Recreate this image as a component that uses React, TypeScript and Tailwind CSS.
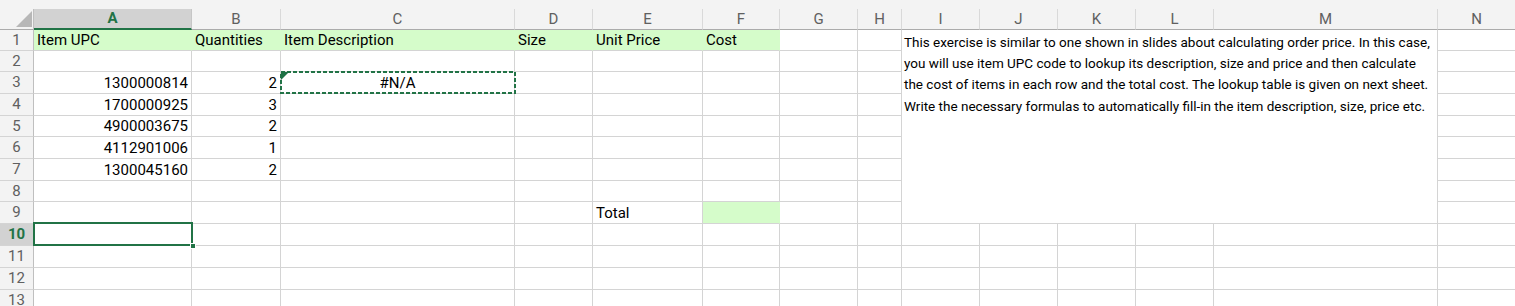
import React from "react";

const COLS = ["A", "B", "C", "D", "E", "F", "G", "H", "I", "J", "K", "L", "M", "N"];
const ROWS = [1, 2, 3, 4, 5, 6, 7, 8, 9, 10, 11, 12, 13];

type Cell = { text?: string; align?: "left" | "right" | "center"; green?: boolean };

const data: Record<string, Cell> = {
  A1: { text: "Item UPC", green: true },
  B1: { text: "Quantities", green: true },
  C1: { text: "Item Description", green: true },
  D1: { text: "Size", green: true },
  E1: { text: "Unit Price", green: true },
  F1: { text: "Cost", green: true },
  A3: { text: "1300000814", align: "right" },
  B3: { text: "2", align: "right" },
  C3: { text: "#N/A", align: "center" },
  A4: { text: "1700000925", align: "right" },
  B4: { text: "3", align: "right" },
  A5: { text: "4900003675", align: "right" },
  B5: { text: "2", align: "right" },
  A6: { text: "4112901006", align: "right" },
  B6: { text: "1", align: "right" },
  A7: { text: "1300045160", align: "right" },
  B7: { text: "2", align: "right" },
  E9: { text: "Total" },
  F9: { green: true },
};

const note = [
  "This exercise is similar to one shown in slides about calculating order price. In this case,",
  "you will use item UPC code to lookup its description, size and price and then calculate",
  "the cost of items in each row and the total cost. The lookup table is given on next sheet.",
  "Write the necessary formulas to automatically fill-in the item description, size, price etc.",
];

// I1:M9 is one merged cell holding the note
const inMerge = (r: number, c: number) => r >= 1 && r <= 9 && c >= 8 && c <= 12;

function cx(...parts: (string | false | undefined)[]) {
  return parts.filter(Boolean).join(" ");
}

const ColHeader = ({ label, active }: { label: string; active: boolean }) => (
  <div
    className={
      active
        ? "flex items-center justify-center bg-[#d2d2d2] border-r border-r-[#c6c6c6] border-b-2 border-b-[#217346] font-bold text-[#217346]"
        : "flex items-center justify-center bg-[#f3f3f3] border-r border-r-[#d9d9d9] border-b border-b-[#ababab] text-[#606060]"
    }
  >
    {label}
  </div>
);

const RowHeader = ({ n, active }: { n: number; active: boolean }) => (
  <div
    className={
      active
        ? "flex items-center justify-center bg-[#d2d2d2] border-r border-r-[#ababab] border-b border-b-[#d4d4d4] font-bold text-[#217346]"
        : "flex items-center justify-center bg-[#f3f3f3] border-r border-r-[#bfbfbf] border-b border-b-[#d4d4d4] text-[#606060]"
    }
  >
    {n}
  </div>
);

const GridCell = ({ id }: { id: string }) => {
  const cell = data[id];
  const align = cell?.align ?? "left";
  return (
    <div
      className={cx(
        "relative flex items-end pb-[2px] px-[3px] whitespace-nowrap border-b border-b-[#d4d4d4]",
        cell?.green ? "bg-[#d5fcca] border-r border-r-transparent" : "border-r border-r-[#d4d4d4]",
        align === "right" && "justify-end",
        align === "center" && "justify-center"
      )}
    >
      {cell?.text}
      {id === "C3" && (
        <svg className="absolute -left-px -top-px z-10" width="236" height="23">
          <rect x="1" y="1" width="234" height="21" fill="none" stroke="#217346" strokeWidth="2" strokeDasharray="4 2" />
          <polygon points="1,1 9,1 1,9" fill="#1e7145" />
        </svg>
      )}
      {id === "A10" && (
        <>
          <div className="absolute -left-px -top-[2px] z-10 w-[160px] h-[24px] border-2 border-[#217346]" />
          <div className="absolute left-[156px] top-[19px] z-20 w-[6px] h-[6px] bg-[#217346] border border-white" />
        </>
      )}
    </div>
  );
};

export default function App() {
  return (
    <div className="w-[1515px] h-[306px] overflow-hidden bg-white text-[15px] leading-none text-black font-['Roboto',sans-serif]">
      <div className="h-[9px] bg-[#f3f3f3]" />
      <div className="grid grid-cols-[34px_158px_89px_234px_78px_110px_77px_78px_44px_78px_78px_78px_78px_224px_78px] grid-rows-[21px_21px_21px_22px_22px_21px_22px_22px_21px_22px_22px_22px_22px_22px]">
        <div className="relative bg-[#f3f3f3] border-r border-r-[#bfbfbf] border-b border-b-[#ababab]">
          <svg className="absolute left-[15px] top-px" width="18" height="18">
            <polygon points="17,1 17,17 1,17" fill="#b7b7b7" />
          </svg>
        </div>
        {COLS.map((c, i) => (
          <ColHeader key={c} label={c} active={i === 0} />
        ))}
        {ROWS.map((r) => (
          <React.Fragment key={r}>
            <RowHeader n={r} active={r === 10} />
            {COLS.map((c, ci) => {
              if (r === 1 && ci === 8) {
                return (
                  <div
                    key={c + r}
                    className="col-span-5 row-span-9 border-r border-r-[#d4d4d4] border-b border-b-[#d4d4d4] pl-[2px] pt-[2px] text-[13.5px] leading-[21.2px] whitespace-nowrap"
                  >
                    {note.map((line) => (
                      <div key={line}>{line}</div>
                    ))}
                  </div>
                );
              }
              if (inMerge(r, ci)) return null;
              return <GridCell key={c + r} id={c + r} />;
            })}
          </React.Fragment>
        ))}
      </div>
    </div>
  );
}
